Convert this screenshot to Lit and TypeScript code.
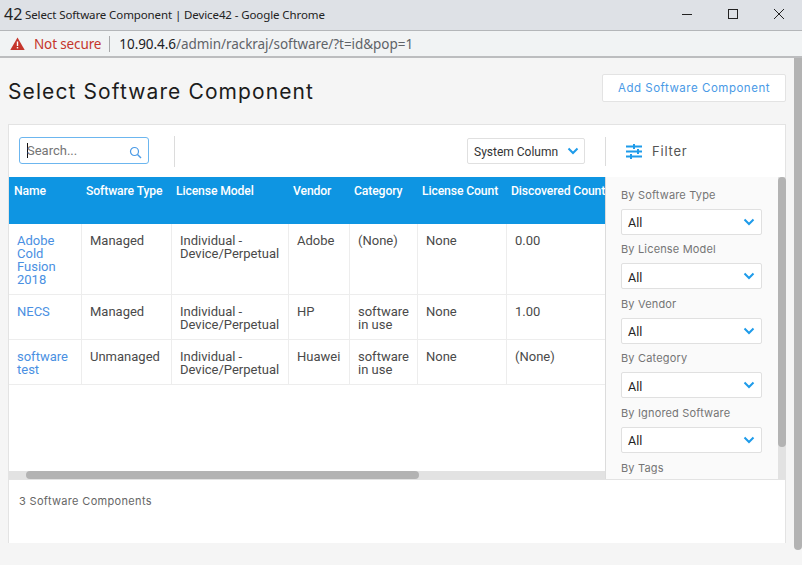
import { LitElement, html, css } from "lit";
import { customElement } from "lit/decorators.js";

const chevron = html`<svg class="chev" width="12" height="8" viewBox="0 0 12 8"><path d="M1.5 1.5 L6 6 L10.5 1.5" fill="none" stroke="#1e9bea" stroke-width="2"/></svg>`;

const rows = [
  ["Adobe Cold Fusion 2018", "Managed", "Individual - Device/Perpetual", "Adobe", "(None)", "None", "0.00"],
  ["NECS", "Managed", "Individual - Device/Perpetual", "HP", "software in use", "None", "1.00"],
  ["software test", "Unmanaged", "Individual - Device/Perpetual", "Huawei", "software in use", "None", "(None)"],
];
const heads = ["Name", "Software Type", "License Model", "Vendor", "Category", "License Count", "Discovered Count"];
const filters = ["By Software Type", "By License Model", "By Vendor", "By Category", "By Ignored Software"];

@customElement("app-root")
export class AppRoot extends LitElement {
  static styles = css`
    :host { display: block; width: 802px; height: 567px; overflow: hidden; background: #fff; font-family: "Roboto", sans-serif; }
    .titlebar { height: 30px; box-sizing: content-box; background: #dee1e6; border-bottom: 1px solid #b4b6b9; display: flex; align-items: center; padding-bottom: 0; font-family: "Noto Sans", sans-serif; color: #222; }
    .logo { font-size: 16px; margin: -2px 0 0 4px; width: 21px; color: #222; letter-spacing: 0; }
    .wintitle { font-size: 11.5px; flex: 1; white-space: nowrap; letter-spacing: -0.009em; margin-top: -2px; }
    .winbtns { display: flex; align-items: center; gap: 36px; margin: -2px 18px 0 0; }
    .winbtns svg { display: block; }
    .addr { height: 25px; background: #f1f3f4; border-bottom: 2px solid #bcbdbf; display: flex; align-items: center; font-family: "Noto Sans", sans-serif; font-size: 13.5px; white-space: nowrap; }
    .warn { margin-left: 10px; margin-right: 9px; display: block; }
    .ns { color: #c5352b; letter-spacing: -0.01em; }
    .sep { width: 1px; height: 16px; background: #a8a9ab; margin: 0 9px 0 8px; }
    .url { color: #5f6368; letter-spacing: -0.004em; }
    .url b { font-weight: 400; color: #202124; }
    .page { height: 507px; display: flex; background: #f5f5f5; }
    .main { width: 794px; padding: 16px 8px 0 8px; box-sizing: border-box; }
    .pagebar { width: 8px; height: 492px; background: #b3b3b3; border-radius: 0 0 4px 4px; }
    .head { display: flex; justify-content: space-between; align-items: flex-start; height: 50px; }
    h1 { margin: 3px 0 0; font: 400 21px/30px "Inter", sans-serif; letter-spacing: 0.0525em; color: #1c1c1c; }
    .add { width: 184px; height: 28px; box-sizing: border-box; background: #fff; border: 1px solid #e3e3e3; border-radius: 2px; color: #4a9ae6; font: 400 11.5px/26px "Inter", sans-serif; letter-spacing: 0.045em; text-align: center; }
    .card { width: 778px; height: 419px; box-sizing: border-box; background: #fff; border: 1px solid #e3e3e3; border-bottom: 0; display: flex; flex-direction: column; }
    .toolbar { height: 52px; flex: none; display: flex; align-items: center; }
    .search { margin-left: 10px; width: 130px; height: 27px; box-sizing: border-box; border: 1px solid #6cb6ef; border-radius: 3px; display: flex; align-items: center; padding: 0 6px 0 7px; font-size: 13px; color: #757575; margin-top: -1px; }
    .caret { width: 1px; height: 15px; background: #111; margin-right: -1px; }
    .search span { flex: 1; }
    .search svg { margin-top: 3px; }
    .vsep { width: 1px; height: 31px; background: #dcdcdc; margin-left: 25px; }
    .spacer { flex: 1; }
    .sys { width: 118px; height: 26px; box-sizing: border-box; border: 1px solid #e0e0e0; border-radius: 2px; display: flex; align-items: center; justify-content: space-between; padding: 0 5px 0 6px; font-size: 12px; color: #333; margin-right: 20px; }
    .seltext { margin-top: 2px; }
    .vsep2 { width: 1px; height: 29px; background: #dcdcdc; }
    .fbtn { width: 179px; display: flex; align-items: center; font: 400 13px "Inter", sans-serif; letter-spacing: 0.06em; color: #555; box-sizing: border-box; padding-left: 20px; gap: 10px; }
    .body { height: 302px; flex: none; display: flex; border-bottom: 1px solid #e3e3e3; }
    .left { width: 596px; flex: none; display: flex; flex-direction: column; overflow: hidden; }
    .thead { height: 47px; flex: none; background: #0e95e2; display: grid; grid-template-columns: 72px 90px 117px 61px 68px 89px 94px; padding-left: 5px; color: #fff; font-size: 12.2px; font-weight: 500; line-height: 28px; white-space: nowrap; overflow: hidden; }
    .thead div { letter-spacing: -0.01em; }
    .tbody { flex: 1; min-height: 0; }
    .row { display: grid; grid-template-columns: 73px 90px 117px 61px 68px 89px 98px; border-bottom: 1px solid #ededed; box-sizing: border-box; font-size: 13px; line-height: 13px; color: #4a4a4a; }
    .row.r0 { height: 71px; }
    .row.r1, .row.r2 { height: 45px; }
    .cell { padding: 10px 4px 0 8px; border-right: 1px solid #ededed; }
    .cell:last-child { border-right: 0; }
    .cell.link { color: #4a90e2; }
    .hbar { height: 8px; flex: none; background: #e2e2e2; }
    .hthumb { margin-left: 17px; width: 393px; height: 8px; background: #b3b3b3; border-radius: 4px; }
    .panel { width: 181px; flex: none; display: flex; background: #fafafa; border-left: 1px solid #dcdcdc; box-sizing: border-box; overflow: hidden; }
    .pcontent { flex: 1; padding: 10.9px 0 0 15px; overflow: hidden; }
    .flabel { font: 400 11px/15px "Inter", sans-serif; letter-spacing: 0.015em; color: #757575; margin-bottom: 6px; white-space: nowrap; }
    .flabel.last { margin-top: 8.5px; }
    .fsel { width: 141px; height: 26px; box-sizing: border-box; background: #fff; border: 1px solid #e0e0e0; border-radius: 2px; display: flex; align-items: center; justify-content: space-between; padding: 0 6px; font-size: 12.5px; color: #222; margin-bottom: 7.5px; }
    .fsel.final { margin-bottom: 0; }
    .vbar { width: 8px; flex: none; background: #e2e2e2; }
    .vthumb { height: 270px; background: #b3b3b3; border-radius: 4px; }
    .foot { flex: 1; padding: 14px 10px; font: 400 11px/15px "Inter", sans-serif; letter-spacing: 0.03em; color: #666; }
    .chev { display: block; flex: none; }
    .ficon { display: block; flex: none; }
    .ficon path { stroke: #1e9bea; stroke-width: 2; }
    .ficon rect { fill: #1e9bea; }
  `;

  render() {
    return html`
      <div class="titlebar">
        <span class="logo">42</span>
        <span class="wintitle">Select Software Component | Device42 - Google Chrome</span>
        <div class="winbtns">
          <svg width="10" height="10" viewBox="0 0 10 10"><path d="M0 5.5H10" stroke="#222" stroke-width="1"/></svg>
          <svg width="10" height="10" viewBox="0 0 10 10"><rect x=".5" y=".5" width="9" height="9" fill="none" stroke="#222"/></svg>
          <svg width="10" height="10" viewBox="0 0 10 10"><path d="M0 0L10 10M10 0L0 10" stroke="#222" stroke-width="1"/></svg>
        </div>
      </div>
      <div class="addr">
        <svg class="warn" width="15" height="13" viewBox="0 0 15 13"><path d="M7.5 0.5L14.7 13H.3Z" fill="#c5352b"/><rect x="6.8" y="4.5" width="1.4" height="4.5" fill="#fff"/><rect x="6.8" y="10" width="1.4" height="1.4" fill="#fff"/></svg>
        <span class="ns">Not secure</span><span class="sep"></span>
        <span class="url"><b>10.90.4.6</b>/admin/rackraj/software/?t=id&amp;pop=1</span>
      </div>
      <div class="page">
        <div class="main">
          <div class="head">
            <h1>Select Software Component</h1>
            <div class="add">Add Software Component</div>
          </div>
          <div class="card">
            <div class="toolbar">
              <div class="search"><i class="caret"></i><span>Search...</span>
                <svg width="13" height="13" viewBox="0 0 13 13"><circle cx="5.5" cy="5.5" r="4" fill="none" stroke="#4a9ae6" stroke-width="1.2"/><path d="M8.5 8.5L12 12" stroke="#4a9ae6" stroke-width="1.4"/></svg>
              </div>
              <div class="vsep"></div>
              <div class="spacer"></div>
              <div class="sys"><span class="seltext">System Column</span> ${chevron}</div>
              <div class="vsep2"></div>
              <div class="fbtn">
                <svg class="ficon" width="16" height="15" viewBox="0 0 16 15"><path d="M0 2.5H16M0 7.5H16M0 12.5H16"/><rect x="7" y="0" width="2" height="5"/><rect x="11" y="5" width="2" height="5"/><rect x="4" y="10" width="2" height="5"/></svg>
                <span>Filter</span>
              </div>
            </div>
            <div class="body">
              <div class="left">
                <div class="thead">${heads.map((h) => html`<div>${h}</div>`)}</div>
                <div class="tbody">
                  ${rows.map((r, i) => html`<div class="row r${i}">
                    ${r.map((c, j) => html`<div class="cell ${j === 0 ? "link" : ""}">${c}</div>`)}
                  </div>`)}
                </div>
                <div class="hbar"><div class="hthumb"></div></div>
              </div>
              <div class="panel">
                <div class="pcontent">
                  ${filters.map((f, i) => html`<div class="flabel">${f}</div><div class="fsel ${i === filters.length - 1 ? "final" : ""}"><span class="seltext">All</span> ${chevron}</div>`)}
                  <div class="flabel last">By Tags</div>
                </div>
                <div class="vbar"><div class="vthumb"></div></div>
              </div>
            </div>
            <div class="foot">3 Software Components</div>
          </div>
        </div>
        <div class="pagebar"></div>
      </div>
    `;
  }
}
